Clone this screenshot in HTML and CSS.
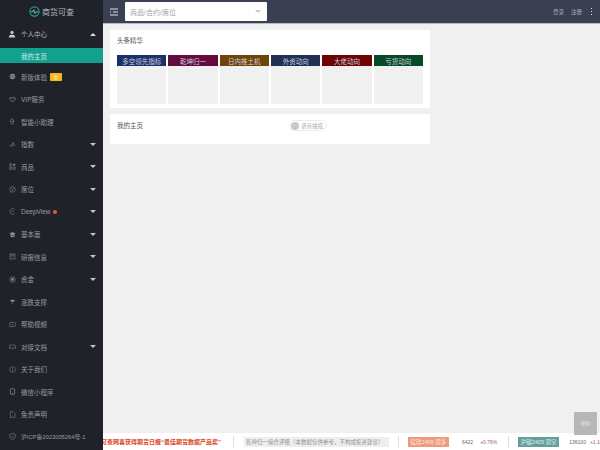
FILE: index.html
```html
<!DOCTYPE html>
<html lang="zh-CN">
<head>
<meta charset="utf-8">
<title>商货可查</title>
<link rel="stylesheet" href="styles.css">
</head>
<body>
<div class="app">
  <aside class="side">
    <div class="logo">
      <svg class="logo-mark" viewBox="0 0 16 16"><circle cx="8" cy="8" r="6.600" fill="none" stroke="#16a394" stroke-width="1.800"/><path d="M3 8.500h2.400l1.500-3 2 5.500 1.400-2.500H13" fill="none" stroke="#c9ccd1" stroke-width="1.100"/></svg>
      <span>商货可查</span>
    </div>
    <nav class="menu">
      <a class="row"><svg class="ic" viewBox="0 0 10 10"><circle cx="5" cy="3" r="2" fill="#c4c7cc"/><path d="M1 9.500c0-3 2-3.500 4-3.500s4 .5 4 3.500z" fill="#c4c7cc"/></svg><span>个人中心</span><i class="caret up"></i></a>
      <a class="sub">我的主页</a>
      <a class="row"><svg class="ic" viewBox="0 0 10 10"><ellipse cx="5" cy="5" rx="4" ry="3.800" fill="#8b8f97"/><path d="M1 4h8M1 6h8" stroke="#1f2229" stroke-width=".6"/></svg><span>新版体验</span><b class="new">新</b></a>
      <a class="row"><svg class="ic" viewBox="0 0 10 10"><path d="M1.500 2.500h7L9 4.500 5 8.500 1 4.500z" fill="none" stroke="#8b8f97"/></svg><span>VIP服务</span></a>
      <a class="row"><svg class="ic" viewBox="0 0 10 10"><path d="M6.500 1.500a3.600 3.600 0 1 0 0 7" fill="none" stroke="#8b8f97"/><circle cx="6" cy="5" r="1.300" fill="#8b8f97"/></svg><span>智能小助理</span></a>
      <a class="row"><svg class="ic" viewBox="0 0 10 10"><path d="M1 6.500l2-1 1 2.500 2-6 1.500 4H9" fill="none" stroke="#8b8f97" stroke-width=".8"/></svg><span>指数</span><i class="caret"></i></a>
      <a class="row"><svg class="ic" viewBox="0 0 10 10"><path d="M1 1h3v3H1zM1 6h3v3H1zM6 6h3v3H6z" fill="none" stroke="#8b8f97" stroke-width=".8"/><circle cx="7.500" cy="2.500" r="1.600" fill="#8b8f97"/></svg><span>商品</span><i class="caret"></i></a>
      <a class="row"><svg class="ic" viewBox="0 0 10 10"><circle cx="5" cy="5" r="4" fill="none" stroke="#8b8f97" stroke-width=".8"/><path d="M3 3l2 2.500L7 3M5 5.500V8" fill="none" stroke="#8b8f97" stroke-width=".7"/></svg><span>席位</span><i class="caret"></i></a>
      <a class="row"><svg class="ic" viewBox="0 0 10 10"><path d="M8 2.200a4 4 0 1 0 0 5.600" fill="none" stroke="#8b8f97" stroke-width=".8"/><path d="M3.500 5h3" stroke="#8b8f97" stroke-width=".8"/></svg><span>DeepView</span><i class="dot"></i><i class="caret"></i></a>
      <a class="row"><svg class="ic" viewBox="0 0 10 10"><path d="M5 1.500L9.500 4 5 6.500.5 4z" fill="#8b8f97"/><path d="M2 5.500V8c1.500 1 4.500 1 6 0V5.500L5 7.200z" fill="#8b8f97"/></svg><span>基本面</span><i class="caret"></i></a>
      <a class="row"><svg class="ic" viewBox="0 0 10 10"><rect x="1.500" y="1.500" width="7" height="7" fill="none" stroke="#8b8f97" stroke-width=".8"/><path d="M3 1.500v3h3v-3" fill="none" stroke="#8b8f97" stroke-width=".7"/></svg><span>研报信息</span><i class="caret"></i></a>
      <a class="row"><svg class="ic" viewBox="0 0 10 10"><circle cx="5" cy="5" r="4" fill="none" stroke="#8b8f97" stroke-width=".8"/><circle cx="5" cy="5" r="2" fill="#8b8f97"/></svg><span>资金</span><i class="caret"></i></a>
      <a class="row"><svg class="ic" viewBox="0 0 10 10"><path d="M1 4l4-2 4 2-4 2z" fill="#8b8f97"/><path d="M5 7v2" stroke="#8b8f97"/></svg><span>涨跌支撑</span></a>
      <a class="row"><svg class="ic" viewBox="0 0 10 10"><rect x="1" y="2" width="8" height="6" rx="1" fill="none" stroke="#8b8f97" stroke-width=".8"/><path d="M4 3.800l2 1.200-2 1.200z" fill="#8b8f97"/></svg><span>帮助视频</span></a>
      <a class="row"><svg class="ic" viewBox="0 0 10 10"><path d="M1 8V3.500C2.500 2 4 2.500 5 3.500c1-1 2.500-1.500 4 0V8c-1.500-1-3-1-4 0-1-1-2.500-1-4 0z" fill="none" stroke="#8b8f97" stroke-width=".8"/></svg><span>对接文档</span><i class="caret"></i></a>
      <a class="row"><svg class="ic" viewBox="0 0 10 10"><circle cx="5" cy="5" r="4" fill="none" stroke="#8b8f97" stroke-width=".8"/><path d="M5 2.800v.8M5 4.500v2.700" stroke="#8b8f97" stroke-width=".8"/></svg><span>关于我们</span></a>
      <a class="row"><svg class="ic" viewBox="0 0 10 10"><rect x="2" y="1" width="6" height="8" rx="1" fill="none" stroke="#8b8f97"/><path d="M4 7.500h2" stroke="#8b8f97" stroke-width=".7"/></svg><span>微信小程序</span></a>
      <a class="row"><svg class="ic" viewBox="0 0 10 10"><path d="M2 1h4l2.500 2.500V9H2z" fill="none" stroke="#8b8f97" stroke-width=".8"/></svg><span>免责声明</span></a>
      <a class="row"><svg class="ic" viewBox="0 0 10 10"><path d="M5 .8l4 1.400v3c0 2-2 3.300-4 4-2-.7-4-2-4-4v-3z" fill="none" stroke="#8b8f97" stroke-width=".8"/><path d="M3.300 5l1.300 1.300 2.200-2.300" fill="none" stroke="#8b8f97" stroke-width=".8"/></svg><span class="icp">沪ICP备2023005264号-1</span></a>
    </nav>
  </aside>
  <div class="main">
    <header class="top">
      <svg class="burger" viewBox="0 0 8 8"><path d="M0 1h8M3 4h5M0 7h8M0 2.800v2.400" stroke="#dfe1e5" fill="none"/></svg>
      <div class="search"><span>商品/合约/席位</span><i class="search-caret"></i></div>
      <div class="top-links"><span>登录</span><span>注册</span><i class="more"></i></div>
    </header>
    <main class="content">
      <section class="card news">
        <h2>头条精华</h2>
        <div class="cols">
          <div class="col"><div class="tag navy">多空领先指标</div></div>
          <div class="col"><div class="tag plum">乾坤归一</div></div>
          <div class="col"><div class="tag brown">日内推土机</div></div>
          <div class="col"><div class="tag slate">外资动向</div></div>
          <div class="col"><div class="tag red">大佬动向</div></div>
          <div class="col"><div class="tag green">亏货动向</div></div>
        </div>
      </section>
      <section class="card home">
        <h2>我的主页</h2>
        <div class="voice"><i></i><span>语音播报</span></div>
      </section>
    </main>
    <footer class="ticker">
      <div class="slide">
        <span class="headline">商货可查网喜获得期货日报“最佳期货数据产品奖”</span>
        <i class="sep"></i>
        <span class="note">乾坤归一综合评级（本数据仅供参考，不构成投资建议）</span>
        <i class="sep"></i>
        <span class="pill up">锰硅2409 弱多</span>
        <span class="num first">6422</span>
        <span class="num">+0.76%</span>
        <i class="sep"></i>
        <span class="pill down">沪镍2405 弱空</span>
        <span class="num first near">136100</span>
        <span class="num">+1.10%</span>
      </div>
    </footer>
  </div>
  <button class="help">帮助</button>
</div>
</body>
</html>
```
FILE: styles.css
```css
* { box-sizing: border-box; }
html, body { margin: 0; height: 100%; overflow: hidden; }
body { font-family: "Liberation Sans", "Noto Sans CJK SC", sans-serif; font-size: 6.500px; color: #333; }
.app { display: flex; width: 600px; height: 450px; }
.side { width: 103px; flex: none; background: #1f2229; display: flex; flex-direction: column; overflow: hidden; }
.logo { height: 23px; flex: none; display: flex; align-items: center; gap: 2px; padding-left: 29px; color: #b4b8be; font-size: 8px; }
.logo-mark { width: 11px; height: 11px; flex: none; }
.menu { display: flex; flex-direction: column; }
.row { height: 22.500px; flex: none; display: flex; align-items: center; padding-left: 9px; color: #9a9da4; }
.ic { width: 7px; height: 7px; flex: none; margin-right: 5px; }
.row:first-child { height: 22px; }
.row:first-child .ic { width: 8px; height: 8px; margin-left: -1px; }
.row:first-child span { color: #b4b7bc; }
.sub { height: 15px; flex: none; margin: 3px 0 2.500px; padding-left: 21px; display: flex; align-items: center; background: #12a08f; color: #d4ece9; }
.caret { margin-left: auto; margin-right: 7px; width: 0; height: 0; border-left: 3px solid transparent; border-right: 3px solid transparent; border-top: 3px solid #c4c7cc; }
.caret.up { border-top: 0; border-bottom: 3px solid #d8dade; }
.dot { width: 4px; height: 4px; border-radius: 50%; background: #ec5a2a; margin-left: 2px; }
.new { margin-left: 3px; width: 12px; height: 8px; border-radius: 1px; background: #f4b71e; color: #fff3cf; font-size: 5px; font-weight: normal; display: flex; align-items: center; justify-content: center; }
.icp { font-size: 5.800px; white-space: nowrap; }
.main { flex: 1; min-width: 0; display: flex; flex-direction: column; background: #f0f0f0; }
.top { height: 23px; flex: none; display: flex; align-items: center; background: #3a3f51; padding-left: 7px; padding-right: 8px; box-shadow: 0 1px 0 #b9bbc2; }
.burger { width: 8px; height: 8px; flex: none; }
.search { width: 142px; height: 19px; margin-left: 7px; background: #fff; border-radius: 1px; display: flex; align-items: center; padding: 0 6px 0 5px; color: #a3a3a3; font-size: 7px; }
.search-caret { margin-left: auto; width: 0; height: 0; border-left: 3px solid transparent; border-right: 3px solid transparent; border-top: 3px solid #c8c8c8; }
.top-links { margin-left: auto; display: flex; align-items: center; gap: 7px; color: #aeb1bb; font-size: 5.500px; }
.more { width: 1px; height: 7px; margin-left: 2px; background: repeating-linear-gradient(#d8dade 0 1px, transparent 1px 3px); }
.content { flex: 1; padding: 7px 170px 0 7px; display: flex; flex-direction: column; gap: 6px; }
.card { background: #fff; }
.card h2 { margin: 0; font-size: 6.500px; line-height: 8px; font-weight: normal; color: #555; }
.news { height: 78px; padding: 7px 7px 0; }
.cols { display: flex; gap: 2px; margin-top: 10px; }
.col { flex: 1; height: 49px; background: #f0f0f0; }
.tag { height: 11px; display: flex; align-items: center; justify-content: center; color: #cdd2dc; }
.navy { background: #1b2f6b; }
.plum { background: #640a3c; }
.brown { background: #6e4408; }
.slate { background: #1f3058; }
.red { background: #6e0404; }
.green { background: #064a28; }
.home { height: 30px; padding: 8px 7px; position: relative; }
.voice { position: absolute; left: 179px; top: 6px; width: 38px; height: 11px; border: 1px solid #ececec; border-radius: 6px; display: flex; align-items: center; gap: 2px; padding-left: 1px; font-size: 5.500px; color: #b0b0b0; }
.voice i { width: 8px; height: 8px; border-radius: 50%; background: #c8c8c8; flex: none; }
.voice span { white-space: nowrap; }
.ticker { height: 17px; flex: none; background: #fff; overflow: hidden; }
.slide { position: relative; left: -14px; height: 17px; display: flex; align-items: center; white-space: nowrap; }
.headline { width: 144px; flex: none; color: #d9471c; font-weight: bold; font-size: 6px; }
.sep { width: 1px; height: 12px; background: #dedede; flex: none; }
.note { margin: 0 9px 0 10px; padding: 1px 2px; background: #eeeeee; color: #929292; font-size: 5.500px; width: 145px; flex: none; }
.pill { margin-left: 9px; width: 41px; height: 10px; flex: none; display: flex; align-items: center; justify-content: center; color: #fbe9e2; font-size: 5.500px; }
.pill.up { background: #ee9a7c; }
.pill.down { background: #62a09c; color: #e3f0ef; }
.num { font-size: 5px; color: #9c6a6a; margin-left: 7px; flex: none; }
.num.first { margin-left: 13px; color: #666; }
.num.near { margin-left: 10px; }
.near + .num { margin-left: 4px; }
.num + .sep { margin-left: 11px; }
.help { position: absolute; left: 574px; top: 412px; width: 23px; height: 23px; border: 0; padding: 0 0 3px; background: #b7b7b7; color: #e4e4e4; font: 5px "Liberation Sans", "Noto Sans CJK SC", sans-serif; }
```
